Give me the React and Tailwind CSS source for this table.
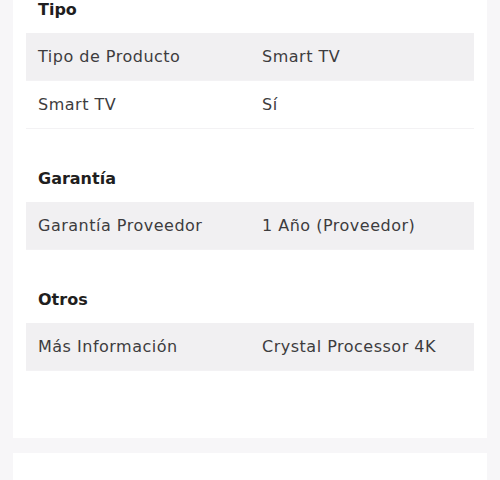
import React from 'react';

const secciones = [
  {
    titulo: 'Tipo',
    filas: [
      ['Tipo de Producto', 'Smart TV'],
      ['Smart TV', 'Sí'],
    ],
  },
  {
    titulo: 'Garantía',
    filas: [['Garantía Proveedor', '1 Año (Proveedor)']],
  },
  {
    titulo: 'Otros',
    filas: [['Más Información', 'Crystal Processor 4K']],
  },
];

const Fila = ({ label, valor, par }) => (
  <div
    className={`flex h-12 items-center border-b border-[#f3f2f4] pt-px tracking-[0.5px] ${
      par ? 'bg-[#f1f0f2]' : 'bg-white'
    }`}
  >
    <div className="w-[224px] pl-3">{label}</div>
    <div className="flex-1 pl-3">{valor}</div>
  </div>
);

export default function App() {
  return (
    <div
      className="h-[480px] w-[500px] overflow-hidden bg-[#f7f6f8] px-[13px] text-[16px] text-[#3d3c3e]"
      style={{ fontFamily: '"DejaVu Sans", sans-serif' }}
    >
      <div className="-mt-[3px] flex h-[441px] flex-col gap-[37px] bg-white px-[13px]">
        {secciones.map((s) => (
          <div key={s.titulo} className="flex flex-col gap-[11px]">
            <h3 className="pl-3 pt-px text-[16px] font-bold leading-6 text-[#1f1e20]">
              {s.titulo}
            </h3>
            <div>
              {s.filas.map(([label, valor], i) => (
                <Fila key={label} label={label} valor={valor} par={i % 2 === 0} />
              ))}
            </div>
          </div>
        ))}
      </div>
      <div className="mt-[15px] h-[40px] bg-white" />
    </div>
  );
}
